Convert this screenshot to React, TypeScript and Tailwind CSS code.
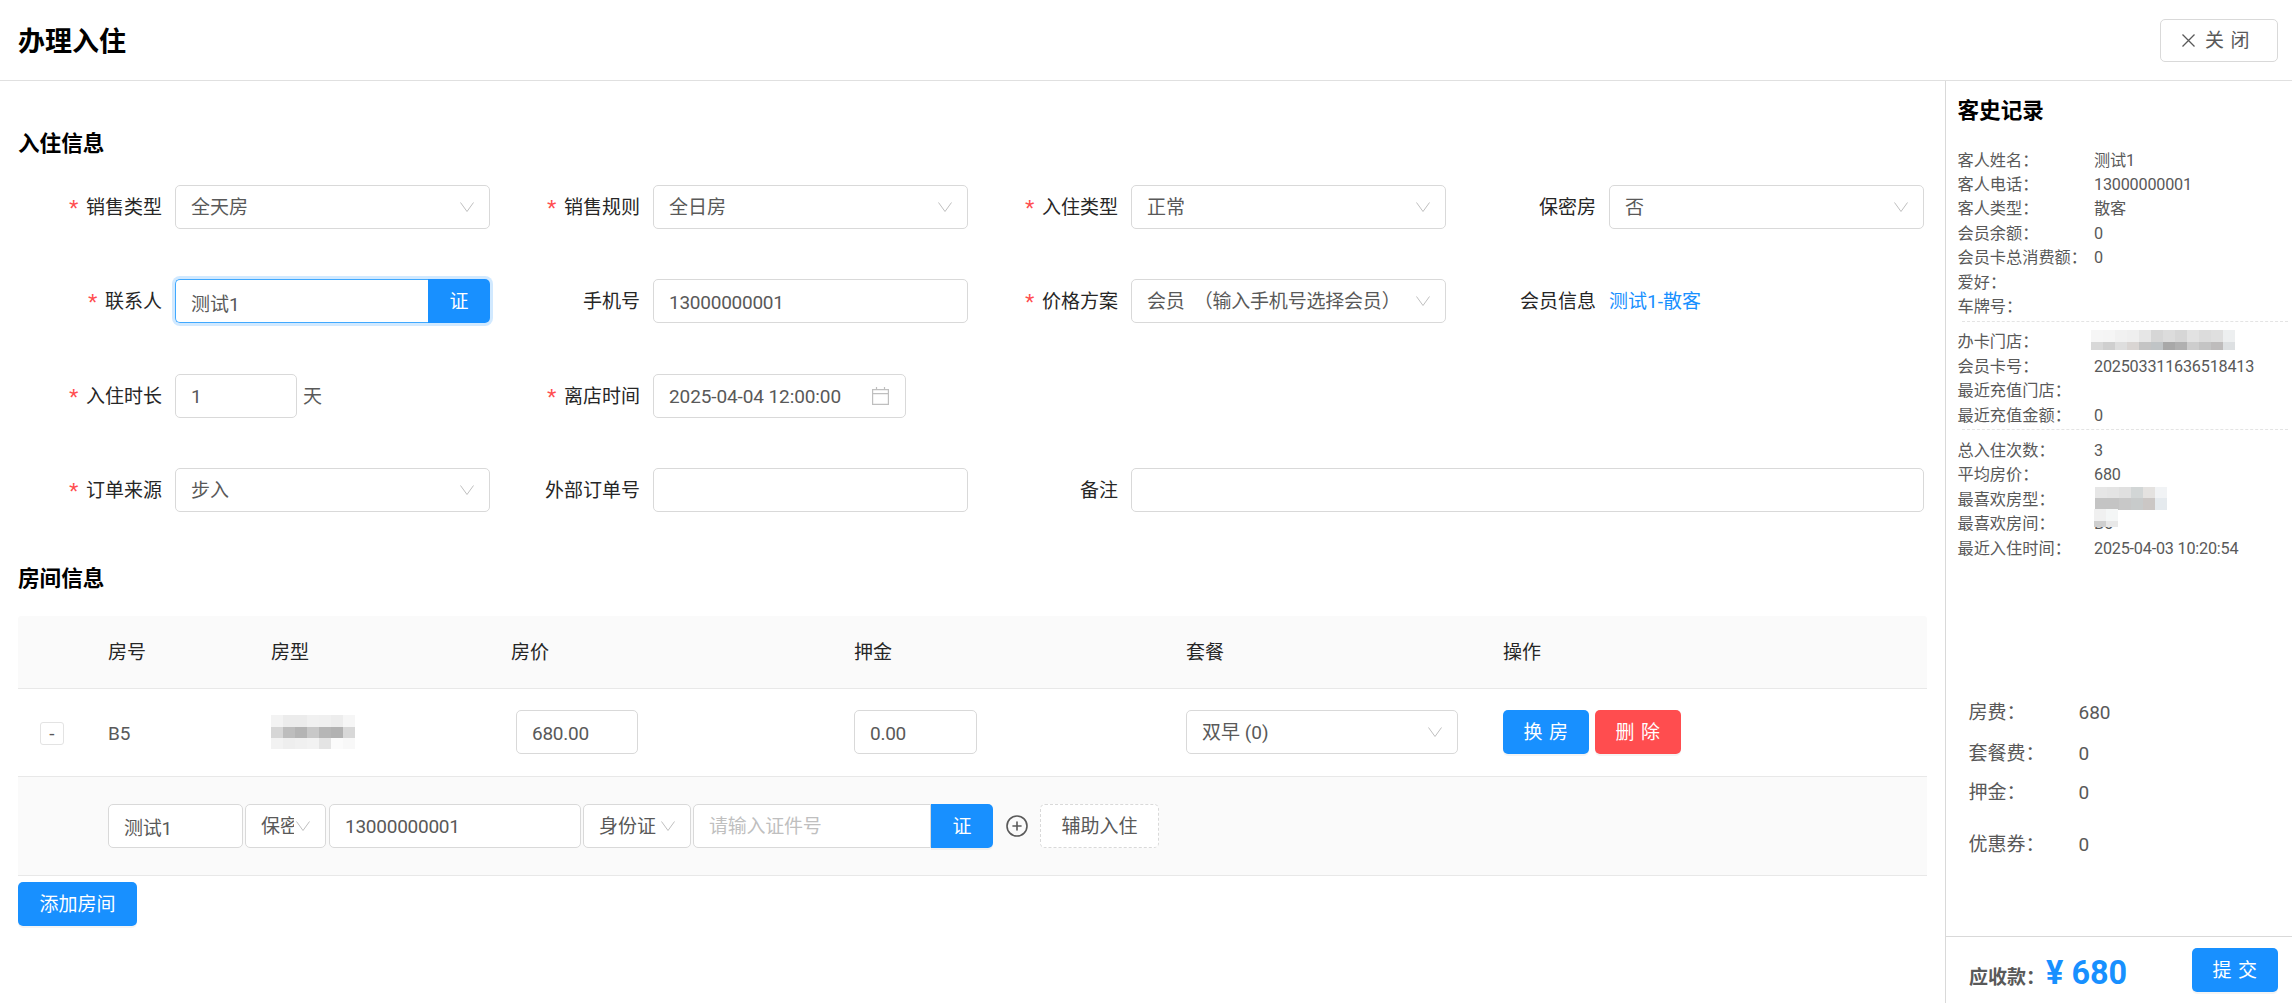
import type { ReactNode } from 'react'
import { CirclePlus } from 'lucide-react'

// ─── helpers ─────────────────────────────────────────────────────────────────

function Chevron() {
  return (
    <svg width="14" height="10" viewBox="0 0 14 10" fill="none" stroke="#bfbfbf" strokeWidth="1" className="shrink-0">
      <path d="M0.5 0.5 L7 9.5 L13.5 0.5" />
    </svg>
  )
}

function CloseIcon() {
  return (
    <svg width="13" height="13" viewBox="0 0 13 13" fill="none" stroke="#595959" strokeWidth="1.3" className="shrink-0">
      <path d="M0.5 0.5 L12.5 12.5 M12.5 0.5 L0.5 12.5" />
    </svg>
  )
}

function CalendarIcon() {
  return (
    <svg width="17" height="18" viewBox="0 0 17 18" fill="none" stroke="#bfbfbf" strokeWidth="1.2" className="shrink-0">
      <path d="M0.6 2.6 H16.4 V17.4 H0.6 Z M0.6 6.6 H16.4 M4.5 0 V2.6 M12.5 0 V2.6" />
    </svg>
  )
}

// blurred-out bits of the screenshot: rows of 12px colour cells
function Mosaic({ rows, heights, cell = 12 }: { rows: string[][]; heights: number[]; cell?: number }) {
  let y = 0
  const width = rows[0].length * cell
  const height = heights.reduce((a, b) => a + b, 0)
  return (
    <svg width={width} height={height} shapeRendering="crispEdges" className="block">
      {rows.map((row, r) => {
        const top = y
        y += heights[r]
        return row.map((c, i) => <rect key={`${r}-${i}`} x={i * cell} y={top} width={cell} height={heights[r]} fill={c} />)
      })}
    </svg>
  )
}

function Field({ label, required, children }: { label: string; required?: boolean; children: ReactNode }) {
  return (
    <div className="flex h-[44px] items-center">
      <div className="flex w-[144px] shrink-0 items-center justify-end pt-[2px] text-[#262626]">
        {required && <span className="mr-[5px] mt-[8px] font-['Liberation_Mono'] text-[24px] leading-none text-[#ff4d4f]">*</span>}
        {label}
      </div>
      <div className="ml-[13px] flex min-w-0 items-center">{children}</div>
    </div>
  )
}

function Select({ value, className }: { value: string; className: string }) {
  return (
    <div className={`flex h-[44px] items-center justify-between rounded-[5px] border border-[#d9d9d9] bg-white pl-[15px] pr-[15px] text-[#595959] ${className}`}>
      <span className="whitespace-pre pt-[2px]">{value}</span>
      <Chevron />
    </div>
  )
}

function Input({ value, placeholder, className }: { value?: string; placeholder?: string; className: string }) {
  return (
    <input
      readOnly
      value={value ?? ''}
      placeholder={placeholder}
      className={`h-[44px] rounded-[5px] border border-[#d9d9d9] bg-white px-[15px] pt-[2px] tracking-[-0.25px] text-[#595959] outline-none placeholder:text-[#bfbfbf] ${className}`}
    />
  )
}

function Btn({ children, className }: { children: ReactNode; className: string }) {
  return (
    <button className={`flex h-[44px] items-center justify-center rounded-[5px] pt-[2px] text-white shadow-[0_2px_0_rgba(0,0,0,0.045)] ${className}`}>
      {children}
    </button>
  )
}

function Info({ label, value, over }: { label: string; value?: string; over?: ReactNode }) {
  return (
    <div className="flex h-[24.4px] items-center pt-[1px]">
      <span className="w-[136.5px] shrink-0">{label}：</span>
      <span className="relative tracking-[-0.2px]">
        {value}
        {over}
      </span>
    </div>
  )
}

function Fee({ label, value, className }: { label: string; value: string; className: string }) {
  return (
    <div className={`flex h-[26px] items-center ${className}`}>
      <span className="w-[110px] shrink-0">{label}：</span>
      <span>{value}</span>
    </div>
  )
}

const STORE_CELLS = [
  ['#f6f6f6', '#f5f5f5', '#f1f1f1', '#efefef', '#e6e6e6', '#d6d6d6', '#dcdcdc', '#d6d6d6', '#e2e2e2', '#dcdcdc', '#dfdfdf', '#edeff0'],
  ['#d8d8d8', '#cfcfcf', '#dedede', '#d9d5d3', '#c4c4c4', '#c0c4c6', '#a8a8a8', '#b0b0b0', '#cdcdcd', '#c4c4c4', '#bebcbc', '#dde0e2'],
]
const FAV_TYPE_CELLS = [
  ['#e6e6e6', '#e4e4e4', '#e0e0e0', '#d2d6d6', '#e4e2e0', '#f1f3f5'],
  ['#c4c4c4', '#c4c4c4', '#c8c8c8', '#c8cbcb', '#cbc7c5', '#e5eaee'],
]
const FAV_ROOM_CELLS = [
  ['#f0f0f0', '#f4f6f6'],
  ['#cfcfcf', '#e8e8e8'],
]
const ROOM_TYPE_CELLS = [
  ['#f3f3f3', '#ececec', '#ececec', '#f1f1f1', '#f0f0f0', '#ededed', '#f6f6f6'],
  ['#d6d6d6', '#bdbdbd', '#b4b4b4', '#c8c8c8', '#b6b6b6', '#b2b2b2', '#d8d8d8'],
  ['#f2f2f2', '#eeeeee', '#f0f0f0', '#f2f2f2', '#e4e4e4', '#fbfbfb', '#f8f8f8'],
]

const COLS = 'grid-cols-[90px_163px_240px_343px_332px_317px_1fr]'

// ─── component ───────────────────────────────────────────────────────────────

export default function App() {
  return (
    <div className="flex h-screen w-full flex-col overflow-hidden bg-white font-[Roboto,'Noto_Sans_CJK_SC',sans-serif] text-[19px] leading-[26px] text-[#595959]">
      {/* ── header ── */}
      <header className="flex h-[81px] shrink-0 items-center justify-between border-b border-[#e0e0e0] pl-[18px] pr-[14px]">
        <h1 className="pt-[3px] text-[27px] font-bold text-[#000000]">办理入住</h1>
        <button className="flex h-[43px] w-[118px] items-center justify-center gap-[10px] rounded-[5px] border border-[#d9d9d9] bg-white text-[#595959]">
          <CloseIcon />
          <span className="pt-[2px] tracking-[0.34em]">关闭</span>
        </button>
      </header>

      <div className="flex min-h-0 flex-1">
        {/* ── form + rooms ── */}
        <main className="min-w-0 flex-1 px-[18px] pt-[48px]">
          <h2 className="h-[30px] text-[21.6px] font-bold leading-[30px] text-[#000000]">入住信息</h2>
          <div className="mt-[26px] grid grid-cols-[repeat(4,478px)] gap-y-[50.33px]">
            <Field label="销售类型" required>
              <Select value="全天房" className="w-[315px]" />
            </Field>
            <Field label="销售规则" required>
              <Select value="全日房" className="w-[315px]" />
            </Field>
            <Field label="入住类型" required>
              <Select value="正常" className="w-[315px]" />
            </Field>
            <Field label="保密房">
              <Select value="否" className="w-[315px]" />
            </Field>

            <Field label="联系人" required>
              <div className="flex h-[44px] w-[315px] rounded-[5px] shadow-[0_0_0_3px_rgba(24,144,255,0.2)]">
                <input
                  readOnly
                  value="测试1"
                  className="h-full min-w-0 flex-1 rounded-l-[5px] border border-r-0 border-[#40a9ff] bg-white px-[15px] pt-[2px] text-[#595959] outline-none"
                />
                <button className="h-full w-[62px] rounded-r-[5px] bg-[#1890ff] pt-[2px] text-white">证</button>
              </div>
            </Field>
            <Field label="手机号">
              <Input value="13000000001" className="w-[315px]" />
            </Field>
            <Field label="价格方案" required>
              <Select value="会员  （输入手机号选择会员）" className="w-[315px] tracking-[-0.2px]" />
            </Field>
            <Field label="会员信息">
              <span className="pt-[2px] text-[#1890ff]">测试1-散客</span>
            </Field>

            <Field label="入住时长" required>
              <Input value="1" className="w-[122px]" />
              <span className="ml-[6px] pt-[2px]">天</span>
            </Field>
            <Field label="离店时间" required>
              <div className="flex h-[44px] w-[253px] items-center justify-between rounded-[5px] border border-[#d9d9d9] bg-white pl-[15px] pr-[16px] text-[#595959]">
                <span className="pt-[2px] tracking-[-0.1px]">2025-04-04 12:00:00</span>
                <CalendarIcon />
              </div>
            </Field>
            <div className="col-span-2" />

            <Field label="订单来源" required>
              <Select value="步入" className="w-[315px]" />
            </Field>
            <Field label="外部订单号">
              <Input className="w-[315px]" />
            </Field>
            <div className="col-span-2">
              <Field label="备注">
                <Input className="w-[793px]" />
              </Field>
            </div>
          </div>

          <h2 className="mt-[52px] h-[30px] text-[21.6px] font-bold leading-[30px] text-[#000000]">房间信息</h2>

          <div className="mt-[22px]">
            {/* table head */}
            <div className={`grid h-[73px] ${COLS} items-center rounded-t-[3px] border-b border-[#e8e8e8] bg-[#fafafa] pt-[2px] text-[#262626]`}>
              <span />
              <span>房号</span>
              <span>房型</span>
              <span>房价</span>
              <span>押金</span>
              <span>套餐</span>
              <span>操作</span>
            </div>

            {/* room row */}
            <div className={`grid h-[88px] ${COLS} items-center border-b border-[#e8e8e8]`}>
              <div className="pl-[22px] pt-[3px]">
                <span className="flex h-[23px] w-[24px] items-center justify-center rounded-[3px] border border-[#e3e3e3] bg-white leading-none">-</span>
              </div>
              <span className="pt-[3px] tracking-[-0.2px]">B5</span>
              <Mosaic rows={ROOM_TYPE_CELLS} heights={[12, 11, 11]} />
              <Input value="680.00" className="ml-[5px] w-[122px]" />
              <Input value="0.00" className="w-[123px]" />
              <Select value="双早 (0)" className="w-[272px]" />
              <div className="flex gap-[6px]">
                <Btn className="w-[86px] bg-[#1890ff] pl-[6px] tracking-[0.34em]">换房</Btn>
                <Btn className="w-[86px] bg-[#ff4d4f] pl-[6px] tracking-[0.34em]">删除</Btn>
              </div>
            </div>

            {/* guest row */}
            <div className="flex h-[99px] items-center border-b border-[#e8e8e8] bg-[#fafafa] pl-[90px]">
              <Input value="测试1" className="w-[135px]" />
              <div className="ml-[2px] flex h-[44px] w-[81px] items-center justify-between overflow-hidden rounded-[5px] border border-[#d9d9d9] bg-white pl-[15px] pr-[15px]">
                <span className="w-[33px] shrink-0 overflow-hidden whitespace-nowrap pt-[2px]">保密</span>
                <Chevron />
              </div>
              <Input value="13000000001" className="ml-[3px] w-[252px]" />
              <div className="ml-[2px] flex h-[44px] w-[108px] items-center justify-between rounded-[5px] border border-[#d9d9d9] bg-white pl-[15px] pr-[15px] text-[#595959]">
                <span className="whitespace-nowrap pt-[2px]">身份证</span>
                <Chevron />
              </div>
              <Input placeholder="请输入证件号" className="ml-[2px] w-[238px] rounded-r-none" />
              <Btn className="w-[62px] rounded-l-none bg-[#1890ff]">证</Btn>
              <CirclePlus size={24} strokeWidth={1.6} className="ml-[12px] text-[#595959]" />
              <div className="ml-[11px] flex h-[44px] w-[119px] items-center justify-center rounded-[5px] border border-dashed border-[#d9d9d9] bg-white pt-[2px]">
                辅助入住
              </div>
            </div>

            <Btn className="mt-[6px] w-[119px] bg-[#1890ff]">添加房间</Btn>
          </div>
        </main>

        {/* ── guest history sidebar ── */}
        <aside className="flex w-[347px] shrink-0 flex-col border-l border-[#d9d9d9]">
          <div className="flex-1 pl-[11.5px] text-[16.2px]">
            <h3 className="mt-[15px] h-[30px] text-[21.6px] font-bold leading-[30px] text-[#000000]">客史记录</h3>
            <div className="mt-[22px]">
              <Info label="客人姓名" value="测试1" />
              <Info label="客人电话" value="13000000001" />
              <Info label="客人类型" value="散客" />
              <Info label="会员余额" value="0" />
              <Info label="会员卡总消费额" value="0" />
              <Info label="爱好" />
              <Info label="车牌号" />
            </div>
            <div className="ml-[4px] mr-[4px] mt-[2px] border-t border-dashed border-[#e4e4e4]" />
            <div className="mt-[8px]">
              <Info
                label="办卡门店"
                over={
                  <span className="absolute -left-[3px] -top-[12px]">
                    <Mosaic rows={STORE_CELLS} heights={[12, 8]} />
                  </span>
                }
              />
              <Info label="会员卡号" value="202503311636518413" />
              <Info label="最近充值门店" />
              <Info label="最近充值金额" value="0" />
            </div>
            <div className="ml-[4px] mr-[4px] mt-[2px] border-t border-dashed border-[#e4e4e4]" />
            <div className="mt-[8px]">
              <Info label="总入住次数" value="3" />
              <Info label="平均房价" value="680" />
              <Info
                label="最喜欢房型"
                over={
                  <span className="absolute left-[1px] -top-[13px]">
                    <Mosaic rows={FAV_TYPE_CELLS} heights={[11, 12]} />
                  </span>
                }
              />
              <Info
                label="最喜欢房间"
                value="B5"
                over={
                  <span className="absolute left-0 -top-[2px]">
                    <Mosaic rows={FAV_ROOM_CELLS} heights={[12, 6]} />
                  </span>
                }
              />
              <Info label="最近入住时间" value="2025-04-03 10:20:54" />
            </div>

            <div className="mt-[140px] pl-[11px] text-[19px]">
              <Fee label="房费" value="680" className="" />
              <Fee label="套餐费" value="0" className="mt-[15px]" />
              <Fee label="押金" value="0" className="mt-[13px]" />
              <Fee label="优惠券" value="0" className="mt-[26px]" />
            </div>
          </div>

          {/* ── footer ── */}
          <div className="flex h-[67px] shrink-0 items-center justify-between border-t border-[#d9d9d9] pl-[23px] pr-[14px]">
            <div className="flex items-center">
              <span className="mt-[16px] font-bold">应收款：</span>
              <span className="ml-[1px] mt-[6px] text-[32.4px] font-bold text-[#1890ff]">¥ 680</span>
            </div>
            <Btn className="w-[86px] bg-[#1890ff] pl-[6px] tracking-[0.34em]">提交</Btn>
          </div>
        </aside>
      </div>
    </div>
  )
}
